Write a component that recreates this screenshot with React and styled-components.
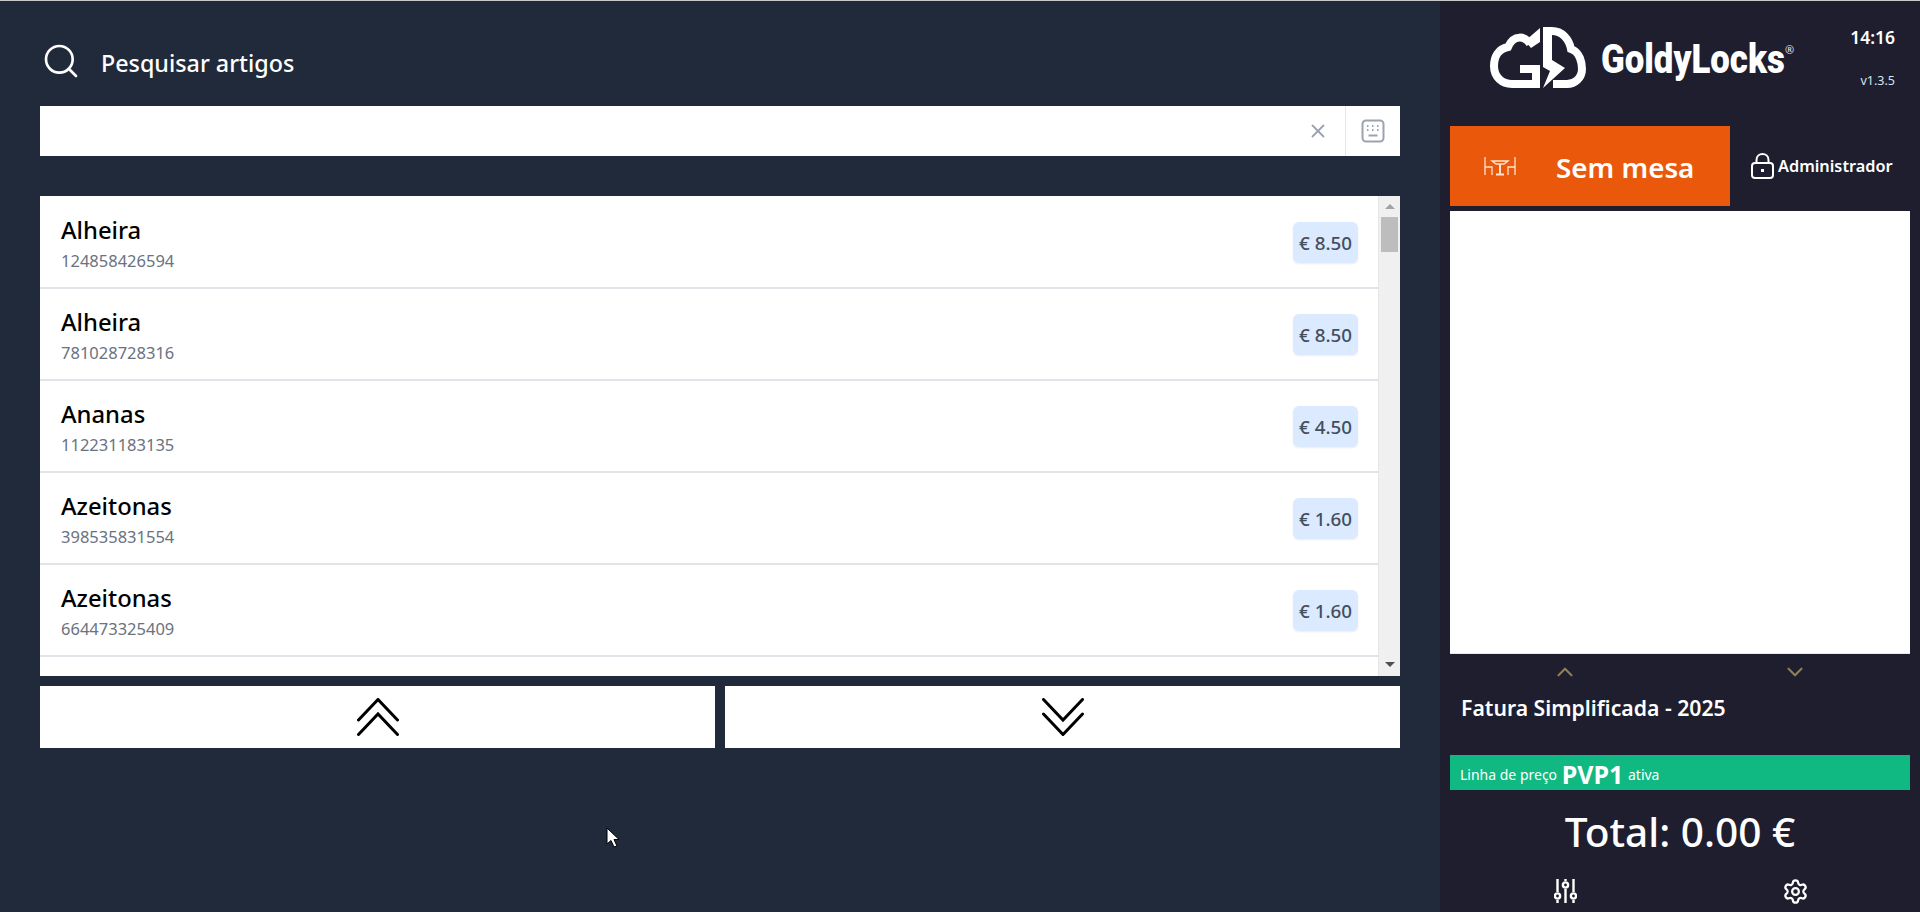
import React from 'react';
import styled, { createGlobalStyle } from 'styled-components';
import { Search, X, Settings, ChevronUp, ChevronDown } from 'lucide-react';

const articles = [
    { name: 'Alheira', code: '124858426594', price: '€ 8.50' },
    { name: 'Alheira', code: '781028728316', price: '€ 8.50' },
    { name: 'Ananas', code: '112231183135', price: '€ 4.50' },
    { name: 'Azeitonas', code: '398535831554', price: '€ 1.60' },
    { name: 'Azeitonas', code: '664473325409', price: '€ 1.60' },
];

const CloudLogo = () => (
    <svg width="96" height="61" viewBox="0 0 96 61">
        <g fill="none" stroke="#fff" strokeWidth="8">
            <path d="M40 17 C35 9 24 7 18 20 C8 22 4 30 4 39 C4 50 12 57 22 57 L46 57 L46 42 L30 42" />
            <path d="M62 4 C72 4 79 12 81 22 C90 25 92 36 92 42 C92 51 85 57 77 57 L63 57" />
        </g>
        <path d="M50 1 L50 15 L41 21 L35 14 Z" fill="#fff" />
        <path d="M53 0 L62 0 L62 33 L75 41 L53 61 L60 44 L53 40 Z" fill="#fff" />
    </svg>
);

const TableIcon = () => (
    <svg width="32" height="20" viewBox="0 0 32 20" fill="none" stroke="#fde3d0" strokeWidth="1.3">
        <path d="M1 1 V19 M31 1 V19 M1 11 H8 V19 M31 11 H24 V19" />
        <path d="M8 5 H24 L20 8 H12 Z" />
        <path d="M16 8 V18 M12 18.5 H20" strokeWidth="2" />
    </svg>
);

const KeyboardIcon = () => (
    <svg width="24" height="24" viewBox="0 0 24 24" fill="none" stroke="#9ca3af">
        <rect x="1.5" y="1.5" width="21" height="21" rx="3.5" strokeWidth="2" />
        <path d="M6 7 H7.5 M11 7 H12.5 M16 7 H17.5 M6 11 H7.5 M11 11 H12.5 M16 11 H17.5" strokeWidth="2" />
        <path d="M7.5 16.5 H16.5" strokeWidth="2" />
    </svg>
);

const LockIcon = () => (
    <svg width="23" height="26" viewBox="0 0 23 26" fill="none" stroke="#fff" strokeWidth="2">
        <rect x="1" y="10" width="21" height="15" rx="3" />
        <path d="M5.5 10 V7 C5.5 -1 17.5 -1 17.5 7 V10" />
        <path d="M11.5 16 V19" strokeWidth="3" />
    </svg>
);

const SlidersIcon = () => (
    <SlidersSvg width="23" height="24" viewBox="0 0 23 24" fill="none" stroke="#fff" strokeWidth="2.4">
        <path d="M3.5 0 V13 M3.5 21 V24 M11.5 0 V2 M11.5 10 V24 M19.5 0 V13 M19.5 21 V24" />
        <circle cx="3.5" cy="17" r="2.6" />
        <circle cx="11.5" cy="6" r="2.6" />
        <circle cx="19.5" cy="17" r="2.6" />
    </SlidersSvg>
);

const DoubleChevron = ({ down }) => (
    <svg width="42" height="38" viewBox="0 0 42 38" fill="none" stroke="#000" strokeWidth="3" strokeLinecap="round">
        {down
            ? <path d="M1.5 1.5 L21 22 L40.5 1.5 M1.5 16 L21 36.5 L40.5 16" />
            : <path d="M1.5 22 L21 1.5 L40.5 22 M1.5 36.5 L21 16 L40.5 36.5" />}
    </svg>
);

const App = () => {
    return (
        <>
            <GlobalStyle />
            <Page>
                <LeftPanel>
                    <SearchHeader>
                        <Search size={40} strokeWidth={1.6} color="#fff" />
                        <SearchTitle>Pesquisar artigos</SearchTitle>
                    </SearchHeader>
                    <SearchBar>
                        <SearchInput />
                        <ClearButton><X size={22} strokeWidth={2} color="#9ca3af" /></ClearButton>
                        <KeyboardButton><KeyboardIcon /></KeyboardButton>
                    </SearchBar>
                    <ArticleList>
                        <Rows>
                            {articles.map((a) => (
                                <Row key={a.code}>
                                    <div>
                                        <ArticleName>{a.name}</ArticleName>
                                        <ArticleCode>{a.code}</ArticleCode>
                                    </div>
                                    <Price>{a.price}</Price>
                                </Row>
                            ))}
                        </Rows>
                        <ScrollTrack>
                            <ArrowUp />
                            <ScrollThumb />
                            <ArrowDown />
                        </ScrollTrack>
                    </ArticleList>
                    <PageButtons>
                        <PageButton><DoubleChevron /></PageButton>
                        <PageButton><DoubleChevron down /></PageButton>
                    </PageButtons>
                    <Cursor width="14" height="22" viewBox="0 0 14 22">
                        <path d="M1 1 V17 L5 13.5 L8 20 L11 19 L8 12.5 L13 12.5 Z" fill="#fff" stroke="#000" />
                    </Cursor>
                </LeftPanel>
                <RightPanel>
                    <BrandBar>
                        <Logo>
                            <CloudLogo />
                            <LogoText>GoldyLocks</LogoText>
                            <LogoMark>®</LogoMark>
                        </Logo>
                        <BrandInfo>
                            <Clock>14:16</Clock>
                            <Version>v1.3.5</Version>
                        </BrandInfo>
                    </BrandBar>
                    <SessionBar>
                        <TableButton>
                            <TableIcon />
                            <TableLabel>Sem mesa</TableLabel>
                        </TableButton>
                        <UserLabel>
                            <LockIcon />
                            Administrador
                        </UserLabel>
                    </SessionBar>
                    <TicketArea />
                    <TicketArrows>
                        <ChevronUp size={26} strokeWidth={2} color="#8c7f5a" />
                        <ChevronDown size={26} strokeWidth={2} color="#8c7f5a" />
                    </TicketArrows>
                    <DocumentType>Fatura Simplificada - 2025</DocumentType>
                    <PriceLine>
                        Linha de preço <PriceLineName>PVP1</PriceLineName> ativa
                    </PriceLine>
                    <Total>Total: 0.00 €</Total>
                    <BottomIcons>
                        <SlidersIcon />
                        <Settings size={27} strokeWidth={2} color="#fff" />
                    </BottomIcons>
                </RightPanel>
            </Page>
        </>
    );
};

export default App;

const GlobalStyle = createGlobalStyle`
    html, body {
        margin: 0;
        padding: 0;
        overflow: hidden;
    }
    body {
        font-family: "Noto Sans", "Open Sans", sans-serif;
    }
    * {
        box-sizing: border-box;
    }
`;

const SlidersSvg = styled.svg`
    margin-top: 1px;
`;

const Page = styled.div`
    width: 1920px;
    height: 912px;
    display: flex;
    border-top: 1px solid #c8c8c8;
    overflow: hidden;
`;

const LeftPanel = styled.div`
    position: relative;
    width: 1440px;
    height: 100%;
    background-color: #212a3a;
    padding: 0 40px;
    display: flex;
    flex-direction: column;
`;

const SearchHeader = styled.div`
    height: 105px;
    display: flex;
    align-items: center;
    gap: 20px;
    padding: 14px 0 0 1px;
`;

const SearchTitle = styled.span`
    color: #fff;
    font-size: 23.3px;
    font-weight: 500;
    margin-top: 4px;
`;

const SearchBar = styled.div`
    height: 50px;
    background-color: #fff;
    display: flex;
    align-items: center;
`;

const SearchInput = styled.div`
    flex: 1;
`;

const ClearButton = styled.div`
    width: 55px;
    display: flex;
    justify-content: center;
`;

const KeyboardButton = styled.div`
    width: 55px;
    height: 100%;
    border-left: 1px solid #e5e7eb;
    display: flex;
    align-items: center;
    justify-content: center;
`;

const ArticleList = styled.div`
    margin-top: 40px;
    height: 480px;
    background-color: #fff;
    display: flex;
`;

const Rows = styled.div`
    flex: 1;
    padding-top: 1px;
    overflow: hidden;
`;

const Row = styled.div`
    height: 92px;
    padding: 0 20px 0 21px;
    border-bottom: 2px solid #e1e3e8;
    display: flex;
    align-items: center;
    justify-content: space-between;
`;

const ArticleName = styled.div`
    color: #000;
    font-size: 23.8px;
    font-weight: 500;
    line-height: 30px;
    margin-top: 3px;
`;

const ArticleCode = styled.div`
    color: #6b7280;
    font-size: 16.5px;
    line-height: 24px;
    margin-top: 4px;
`;

const Price = styled.div`
    height: 41px;
    margin-top: 1px;
    padding: 0 6px;
    background-color: #dbeafe;
    border-radius: 6px;
    box-shadow: 0 1px 2px rgba(0, 0, 0, 0.08);
    color: #434e5f;
    font-size: 18.8px;
    font-weight: 500;
    display: flex;
    align-items: center;
`;

const ScrollTrack = styled.div`
    width: 22px;
    background-color: #f0f0f0;
    border-left: 1px solid #e6e6e6;
    display: flex;
    flex-direction: column;
    align-items: center;
    padding: 8px 0 9px;
`;

const ArrowUp = styled.div`
    border-left: 5px solid transparent;
    border-right: 5px solid transparent;
    border-bottom: 5px solid #a3a3a3;
`;

const ArrowDown = styled.div`
    margin-top: auto;
    border-left: 5px solid transparent;
    border-right: 5px solid transparent;
    border-top: 5px solid #505050;
`;

const ScrollThumb = styled.div`
    width: 17px;
    height: 35px;
    margin-top: 8px;
    background-color: #bdbdbd;
`;

const PageButtons = styled.div`
    margin-top: 10px;
    height: 62px;
    display: grid;
    grid-template-columns: 1fr 1fr;
    gap: 10px;
`;

const PageButton = styled.div`
    background-color: #fff;
    display: flex;
    align-items: center;
    justify-content: center;
`;

const Cursor = styled.svg`
    position: absolute;
    left: 606px;
    top: 826px;
`;

const RightPanel = styled.div`
    width: 480px;
    height: 100%;
    background-color: #1e1e2e;
    padding: 0 10px;
    display: flex;
    flex-direction: column;
`;

const BrandBar = styled.div`
    height: 125px;
    display: flex;
    justify-content: space-between;
    padding: 26px 15px 0 40px;
`;

const Logo = styled.div`
    display: flex;
    align-items: flex-start;
`;

const LogoText = styled.span`
    color: #fff;
    font-family: "Roboto", sans-serif;
    font-size: 40px;
    font-weight: 900;
    line-height: 60px;
    display: inline-block;
    width: 184px;
    margin: 3px 0 0 15px;
    transform: scaleX(0.87);
    transform-origin: left center;
`;

const LogoMark = styled.span`
    color: #e5e7eb;
    font-size: 11px;
    margin: 15px 0 0 0;
`;

const BrandInfo = styled.div`
    display: flex;
    flex-direction: column;
    align-items: flex-end;
`;

const Clock = styled.div`
    color: #fff;
    font-size: 17.5px;
    font-weight: 600;
    line-height: 24px;
    margin-top: -2px;
`;

const Version = styled.div`
    color: #d6e4ef;
    font-size: 12.5px;
    line-height: 18px;
    margin-top: 23px;
`;

const SessionBar = styled.div`
    height: 85px;
    display: flex;
`;

const TableButton = styled.div`
    width: 280px;
    height: 80px;
    background-color: #ea580c;
    display: flex;
    align-items: center;
    padding-left: 34px;
    gap: 40px;
`;

const TableLabel = styled.span`
    color: #fff;
    font-size: 27.8px;
    font-weight: 600;
    margin-top: 2px;
`;

const UserLabel = styled.div`
    height: 80px;
    padding-left: 21px;
    color: #fff;
    font-size: 16.3px;
    font-weight: 600;
    display: flex;
    align-items: center;
    gap: 4px;
`;

const TicketArea = styled.div`
    height: 443px;
    background-color: #fff;
    border-bottom: 1px solid #e5e7eb;
`;

const TicketArrows = styled.div`
    height: 27px;
    padding-top: 5px;
    display: grid;
    grid-template-columns: 1fr 1fr;
    justify-items: center;
`;

const DocumentType = styled.div`
    margin-top: 11px;
    padding-left: 11px;
    color: #fff;
    font-size: 21.2px;
    font-weight: 600;
    line-height: 32px;
`;

const PriceLine = styled.div`
    margin-top: 31px;
    height: 35px;
    background-color: #10b981;
    color: #fff;
    font-size: 14px;
    padding: 0 0 0 10px;
    display: flex;
    align-items: flex-end;
    white-space: pre;
    line-height: 31px;
`;

const PriceLineName = styled.span`
    font-size: 25px;
    font-weight: 700;
    margin: 0 1px;
`;

const Total = styled.div`
    margin-top: 14px;
    color: #fff;
    font-size: 40.6px;
    font-weight: 500;
    line-height: 56px;
    text-align: center;
`;

const BottomIcons = styled.div`
    margin-top: 18px;
    display: grid;
    grid-template-columns: 1fr 1fr;
    justify-items: center;
`;
